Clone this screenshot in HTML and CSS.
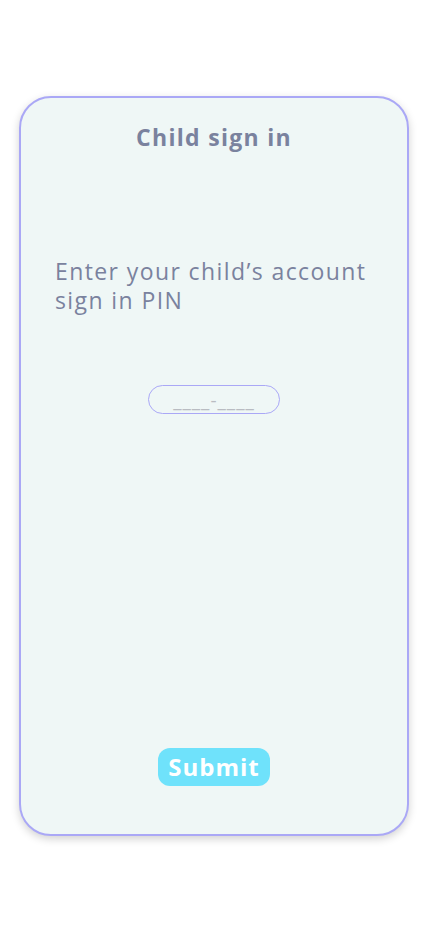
FILE: index.html
```html
<!DOCTYPE html>
<html>
<head>
<meta charset="utf-8">
<link rel="stylesheet" href="styles.css">
</head>
<body>
<div class="page">
  <div class="card">
    <h1 class="title">Child sign in</h1>
    <p class="prompt">Enter your child’s account sign in PIN</p>
    <div class="pin-row">
      <input class="pin" type="text" placeholder="____-____">
    </div>
    <div class="spacer"></div>
    <div class="actions">
      <button class="submit">Submit</button>
    </div>
  </div>
</div>
</body>
</html>
```
FILE: styles.css
```css
* { box-sizing: border-box; }
html, body { margin: 0; padding: 0; background: #ffffff; }
body { font-family: "Open Sans", "Noto Sans", sans-serif; }
.page {
  width: 428px;
  height: 926px;
  padding: 96px 19px 0 19px;
}
.card {
  width: 390px;
  height: 740px;
  border: 2px solid #aaa8f6;
  border-radius: 32px;
  background: #eff7f6;
  box-shadow: 0 3px 8px rgba(0,0,0,0.18);
  display: flex;
  flex-direction: column;
  align-items: stretch;
}
.title {
  margin: 23px 0 0 0;
  text-align: center;
  font-size: 23px;
  font-weight: 700;
  color: #7a829e;
  line-height: 32px;
  letter-spacing: 1.3px;
}
.prompt {
  margin: 104px 0 0 0;
  padding: 0 20px 0 34px;
  font-size: 23px;
  line-height: 29px;
  color: #7a829e;
  letter-spacing: 1.4px;
}
.pin-row {
  margin-top: 70px;
  display: flex;
  justify-content: center;
}
.pin {
  width: 132px;
  height: 29px;
  border: 1px solid #aaa8f6;
  border-radius: 15px;
  background: transparent;
  text-align: center;
  font-family: "Open Sans", sans-serif;
  font-size: 19px;
  letter-spacing: 1px;
  padding: 0;
  outline: none;
}
.pin::placeholder { color: #b9bcc2; }
.spacer { flex: 1; }
.actions {
  display: flex;
  justify-content: center;
  margin-bottom: 48px;
}
.submit {
  width: 112px;
  height: 38px;
  border: none;
  border-radius: 12px;
  background: #6fe2fb;
  color: #ffffff;
  font-family: "Open Sans", sans-serif;
  font-size: 24px;
  font-weight: 700;
  letter-spacing: 1px;
  padding: 0;
  line-height: 38px;
}
```
